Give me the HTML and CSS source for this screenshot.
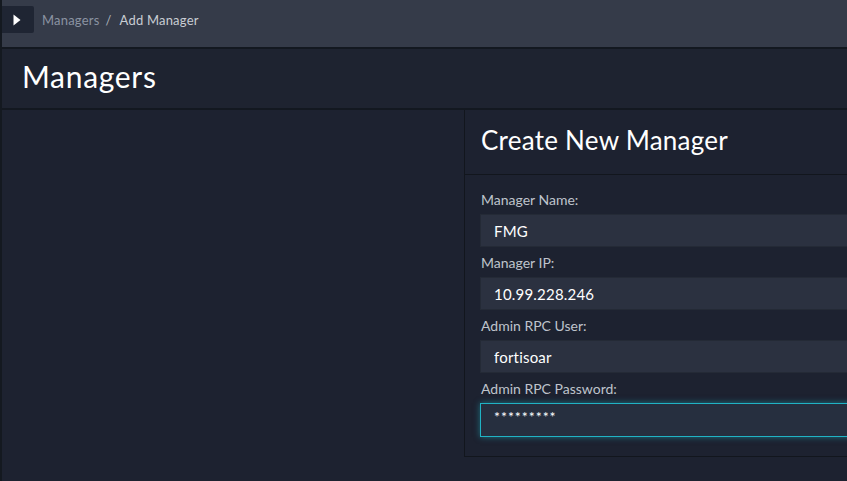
FILE: index.html
```html
<!DOCTYPE html>
<html>
<head>
<meta charset="utf-8">
<link rel="stylesheet" href="styles.css">
</head>
<body>
<div class="app">
  <header class="topbar">
    <button class="toggle" aria-label="Toggle sidebar">
      <svg width="8" height="12" viewBox="0 0 8 12"><path d="M0.5 0.5 L7.5 6 L0.5 11.5 Z" fill="#ffffff"/></svg>
    </button>
    <nav class="crumbs">
      <span class="crumb">Managers</span>
      <span class="sep">/</span>
      <span class="crumb current">Add Manager</span>
    </nav>
  </header>
  <div class="page-header">
    <h1>Managers</h1>
  </div>
  <main class="content">
    <div class="side"></div>
    <section class="card">
      <div class="card-header">
        <h2>Create New Manager</h2>
      </div>
      <form class="card-body">
        <div class="field">
          <label>Manager Name:</label>
          <input class="input" type="text" value="FMG">
        </div>
        <div class="field">
          <label>Manager IP:</label>
          <input class="input" type="text" value="10.99.228.246">
        </div>
        <div class="field">
          <label>Admin RPC User:</label>
          <input class="input" type="text" value="fortisoar">
        </div>
        <div class="field">
          <label>Admin RPC Password:</label>
          <input class="input focused" type="text" value="*********">
        </div>
      </form>
    </section>
  </main>
</div>
</body>
</html>
```

FILE: styles.css
```css
* { box-sizing: border-box; }
html, body {
  margin: 0;
  padding: 0;
  height: 100%;
  overflow: hidden;
}
body {
  background: #1d2230;
  font-family: Lato, "Open Sans", sans-serif;
  color: #ffffff;
}
.app {
  border-left: 2px solid #141920;
  min-height: 100%;
  display: flex;
  flex-direction: column;
}
.topbar {
  height: 49px;
  background: #353b49;
  border-bottom: 2px solid #131820;
  display: flex;
  align-items: flex-start;
  padding-top: 6px;
}
.toggle {
  width: 32px;
  height: 27px;
  border: 0;
  border-radius: 0 2px 2px 0;
  background: #1f2533;
  display: flex;
  align-items: center;
  justify-content: flex-start;
  padding: 1px 0 0 11px;
  margin: 0;
}
.crumbs {
  margin-left: 8px;
  height: 27px;
  display: flex;
  align-items: center;
  gap: 6px;
  font-size: 13px;
  letter-spacing: 0.2px;
}
.crumb { color: #8b93a2; }
.sep { color: #a9afba; margin-right: 2px; }
.crumb.current { color: #c9cdd4; }
.page-header {
  height: 61px;
  background: #1e2330;
  border-bottom: 2px solid #131820;
  display: flex;
  align-items: center;
  padding-left: 20px;
}
.page-header h1 {
  margin: 0;
  font-size: 30px;
  font-weight: 400;
  letter-spacing: 0.7px;
  color: #ffffff;
  padding-bottom: 5px;
}
.content {
  flex: 1;
  display: grid;
  grid-template-columns: 462px 480px;
  align-items: start;
}
.card {
  border: 1px solid #12161d;
  border-top: 0;
  background: #1d2230;
}
.card-header {
  height: 65px;
  border-bottom: 1px solid #12161d;
  display: flex;
  align-items: center;
  padding-left: 16px;
}
.card-header h2 {
  margin: 0;
  font-size: 26px;
  font-weight: 400;
  letter-spacing: 0.25px;
  color: #ffffff;
  padding-bottom: 4px;
}
.card-body {
  margin: 0;
  padding: 16px 0 19px 15px;
  display: flex;
  flex-direction: column;
  gap: 7px;
}
.field {
  display: flex;
  flex-direction: column;
  gap: 5px;
}
.field label {
  font-size: 14px;
  line-height: 18px;
  color: #bfc4cc;
  padding-left: 1px;
}
.input {
  display: block;
  width: 100%;
  height: 33px;
  background: #2b3140;
  border: 1px solid #242a36;
  color: #ffffff;
  font-family: Lato, "Open Sans", sans-serif;
  font-size: 15px;
  letter-spacing: 0.2px;
  padding: 0 13px;
  outline: none;
  margin: 0;
}
.input.focused {
  height: 34px;
  background: #262f3f;
  border-color: #20b3c4;
  box-shadow: 0 0 6px rgba(32, 179, 196, 0.55);
  padding-bottom: 7px;
  font-size: 14px;
  letter-spacing: 1px;
}
```
